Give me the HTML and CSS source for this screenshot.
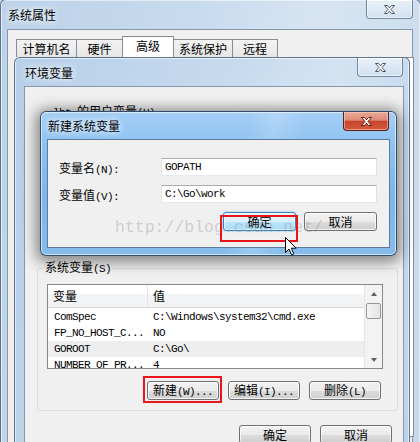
FILE: index.html
```html
<!DOCTYPE html>
<html lang="zh-CN">
<head>
  <meta charset="UTF-8" />
  <title>新建系统变量</title>
  <link rel="stylesheet" href="styles.css">
</head>
<body>
  <div class="desktop">

    <!-- 系统属性 -->
    <div class="win win-sys">
      <div class="titlebar">
        <span class="title">系统属性</span>
        <span class="close">
          <svg width="11" height="9" viewBox="0 0 11 9"><path d="M0.5 0.5h3l2 2.4 2-2.4h3l-3.5 4 3.5 4h-3l-2-2.4-2 2.4h-3l3.5-4z"/></svg>
        </span>
      </div>
      <div class="client sys-client">
        <div class="tabs">
          <div class="tab t1">计算机名</div>
          <div class="tab t2">硬件</div>
          <div class="tab t3 selected">高级</div>
          <div class="tab t4">系统保护</div>
          <div class="tab t5">远程</div>
        </div>
        <div class="tabpage"></div>
      </div>
    </div>

    <!-- 环境变量 -->
    <div class="win win-env">
      <div class="titlebar">
        <span class="title">环境变量</span>
        <span class="close">
          <svg width="11" height="9" viewBox="0 0 11 9"><path d="M0.5 0.5h3l2 2.4 2-2.4h3l-3.5 4 3.5 4h-3l-2-2.4-2 2.4h-3l3.5-4z"/></svg>
        </span>
      </div>
      <div class="client env-client">
        <div class="user-vars">
          <div class="caption"><span class="m">lbt </span>的用户变量<span class="m">(U)</span></div>
        </div>

        <fieldset class="group">
          <legend>系统变量<span class="m">(S)</span></legend>
          <div class="listview">
            <div class="lv-body">
              <div class="lv-header">
                <div class="col-name">变量</div>
                <div class="col-value">值</div>
              </div>
              <div class="lv-rows">
                <div class="lv-row"><div class="col-name m">ComSpec</div><div class="col-value m">C:\Windows\system32\cmd.exe</div></div>
                <div class="lv-row"><div class="col-name m">FP_NO_HOST_C...</div><div class="col-value m">NO</div></div>
                <div class="lv-row hover"><div class="col-name m">GOROOT</div><div class="col-value m">C:\Go\</div></div>
                <div class="lv-row"><div class="col-name m">NUMBER_OF_PR...</div><div class="col-value m">4</div></div>
              </div>
            </div>
            <div class="scrollbar">
              <div class="sb-arrow"><span class="tri up"></span></div>
              <div class="sb-thumb"></div>
              <div class="sb-track"></div>
              <div class="sb-arrow"><span class="tri down"></span></div>
            </div>
          </div>
          <div class="btn-row group-btns">
            <button class="btn">新建<span class="m">(W)...</span></button>
            <button class="btn">编辑<span class="m">(I)...</span></button>
            <button class="btn">删除<span class="m">(L)</span></button>
          </div>
        </fieldset>

        <div class="btn-row env-btns">
          <button class="btn">确定</button>
          <button class="btn">取消</button>
        </div>
      </div>
    </div>

    <!-- 新建系统变量 -->
    <div class="win win-new">
      <div class="titlebar">
        <span class="title">新建系统变量</span>
        <span class="close close-red">
          <svg width="11" height="9" viewBox="0 0 11 9"><path d="M0.5 0.5h3l2 2.4 2-2.4h3l-3.5 4 3.5 4h-3l-2-2.4-2 2.4h-3l3.5-4z"/></svg>
        </span>
      </div>
      <div class="client new-client">
        <div class="field">
          <label class="field-label">变量名<span class="m">(N):</span></label>
          <div class="textbox m">GOPATH</div>
        </div>
        <div class="field">
          <label class="field-label">变量值<span class="m">(V):</span></label>
          <div class="textbox m">C:\Go\work</div>
        </div>
        <div class="btn-row new-btns">
          <button class="btn btn-hot">确定</button>
          <button class="btn">取消</button>
        </div>
      </div>
    </div>

    <!-- 博客水印 / 标注 -->
    <div class="watermark">http://blog.csdn.net/</div>
    <div class="mark mark-ok"></div>
    <div class="mark mark-new"></div>
    <svg class="cursor" width="13" height="19" viewBox="0 0 13 19">
      <path d="M0.5 0.5V15.5L4 12L6.6 17.8L8.8 16.8L6.3 11.2H11.2Z" fill="#fff" stroke="#000" stroke-width="1" stroke-linejoin="miter"/>
    </svg>
  </div>
</body>
</html>
```

FILE: styles.css
```css
body {
  margin: 0;
  font-family: "Noto Sans CJK SC", sans-serif;
  font-size: 12px;
  color: #000;
  background: #c4d8ee;
}

.desktop {
  position: relative;
  width: 420px;
  height: 442px;
  overflow: hidden;
}

.m {
  font-family: "Liberation Mono", monospace;
  font-size: 11px;
  letter-spacing: -0.6px;
}

/* fenetres */
.win {
  position: absolute;
  display: flex;
  flex-direction: column;
  box-sizing: border-box;
  border: 1px solid rgba(60, 80, 105, 0.75);
  border-radius: 6px 6px 0 0;
  background: linear-gradient(100deg, #bcd2e9 0%, #c8dbee 40%, #d7e5f3 65%, #c3d8ed 100%);
  box-shadow: inset 0 0 0 1px rgba(255, 255, 255, 0.55);
}

.titlebar {
  display: flex;
  justify-content: space-between;
  align-items: flex-start;
  flex: none;
}

.title {
  margin-left: 1px;
  text-shadow: 0 0 6px #fff, 0 0 10px rgba(255, 255, 255, 0.8);
}

.close {
  display: flex;
  align-items: center;
  justify-content: center;
  width: 47px;
  height: 19px;
  box-sizing: border-box;
  border: 1px solid rgba(70, 90, 115, 0.7);
  border-top: none;
  border-radius: 0 0 4px 4px;
  background: linear-gradient(rgba(255, 255, 255, 0.55), rgba(215, 228, 242, 0.35));
  box-shadow: inset 0 0 0 1px rgba(255, 255, 255, 0.6);
}

.close svg path {
  fill: #fff;
  stroke: #4a5668;
  stroke-width: 1;
}

.close-red {
  border-color: #5e1e16;
  background: linear-gradient(#e9a895 0%, #dc8c78 45%, #c8432c 52%, #d35a3e 100%);
  box-shadow: inset 0 0 0 1px rgba(255, 220, 210, 0.5);
}

.close-red svg path {
  stroke: #6b1d12;
}

.client {
  flex: 1;
  background: #f0f0f0;
  border: 1px solid #8796a8;
  border-bottom: none;
}

/* 系统属性 */
.win-sys {
  left: 0;
  top: -1px;
  width: 421px;
  height: 470px;
  padding: 0 7px 0 6px;
}

.win-sys .titlebar {
  height: 29px;
  line-height: 29px;
}

.win-sys .title {
  margin-left: 1px;
}

.sys-client {
  padding: 6px 0 0 8px;
}

.tabs {
  display: flex;
  align-items: flex-end;
  height: 21px;
}

.tab {
  box-sizing: border-box;
  height: 18px;
  line-height: 17px;
  text-align: center;
  border: 1px solid #898c95;
  border-bottom: none;
  margin-right: -1px;
  background: linear-gradient(#f3f3f3, #e6e6e6);
}

.t1 { width: 61px; }
.t2 { width: 47px; }
.t3 { width: 52px; }
.t4 { width: 60px; }
.t5 { width: 46px; }

.tab.selected {
  position: relative;
  z-index: 1;
  height: 21px;
  line-height: 18px;
  background: #fff;
}

.tabpage {
  box-sizing: border-box;
  margin-left: 7px;
  width: 391px;
  height: 380px;
  background: #fff;
  border: 1px solid #898c95;
}

/* 环境变量 */
.win-env {
  left: 14px;
  top: 57px;
  width: 396px;
  height: 420px;
  padding: 0 5px 0 9px;
  background: linear-gradient(100deg, #b7cfe8 0%, #c6daee 45%, #d3e3f2 70%, #bdd3ea 100%);
}

.win-env .titlebar {
  height: 28px;
  line-height: 29px;
}

.win-env .close {
  margin-right: 1px;
  width: 46px;
}

.env-client {
  padding: 0 11px 0 12px;
}

.user-vars {
  height: 173px;
  padding-left: 16px;
  box-sizing: border-box;
  padding-top: 17px;
}

.caption {
  line-height: 14px;
}

.group {
  margin: 0;
  width: 361px;
  box-sizing: border-box;
  padding: 0 14px 10px 9px;
  border: 1px solid #d5dfe5;
  border-radius: 3px;
  min-width: 0;
}

.group legend {
  margin-left: -4px;
  padding: 0 2px;
  line-height: 14px;
}

.listview {
  display: flex;
  margin-top: 8px;
  height: 85px;
  box-sizing: border-box;
  border: 1px solid #828790;
  background: #fff;
}

.lv-body {
  flex: 1;
  overflow: hidden;
}

.lv-header {
  display: flex;
  height: 22px;
  line-height: 22px;
  border-bottom: 1px solid #d5d5d5;
  background: linear-gradient(#ffffff 0%, #ffffff 42%, #f3f4f6 42%, #f1f2f4 100%);
}

.lv-header .col-name {
  border-right: 1px solid #e3e4e7;
  padding-left: 5px;
}

.col-name {
  width: 100px;
  flex: none;
  box-sizing: border-box;
  padding-left: 6px;
  white-space: nowrap;
}

.col-value {
  padding-left: 5px;
  white-space: nowrap;
}

.lv-rows {
  padding-top: 1px;
}

.lv-row {
  display: flex;
  height: 16px;
  line-height: 16px;
}

.lv-row.hover {
  background: #eeeeee;
}

.scrollbar {
  width: 17px;
  flex: none;
  display: flex;
  flex-direction: column;
  background: #f3f3f3;
  border-left: 1px solid #e6e6e6;
}

.sb-arrow {
  height: 17px;
  display: flex;
  align-items: center;
  justify-content: center;
}

.tri {
  width: 0;
  height: 0;
  border-left: 3.5px solid transparent;
  border-right: 3.5px solid transparent;
}

.tri.up {
  border-bottom: 4px solid #606060;
}

.tri.down {
  border-top: 4px solid #606060;
}

.sb-thumb {
  height: 16px;
  margin: 1px 1px 0;
  box-sizing: border-box;
  border: 1px solid #979797;
  border-radius: 2px;
  background: linear-gradient(90deg, #f5f5f5, #e4e4e4);
}

.sb-track {
  flex: 1;
}

/* boutons */
.btn-row {
  display: flex;
  justify-content: flex-end;
}

.btn {
  width: 72px;
  height: 19px;
  box-sizing: border-box;
  padding: 0;
  border: 1px solid #707070;
  border-radius: 3px;
  background: linear-gradient(#f2f2f2 0%, #ebebeb 50%, #dddddd 50%, #cfcfcf 100%);
  box-shadow: inset 0 0 0 1px rgba(255, 255, 255, 0.75);
  font-family: "Noto Sans CJK SC", sans-serif;
  font-size: 12px;
  line-height: 16px;
  color: #000;
}

.btn-hot {
  border-color: #3c7fb1;
  background: linear-gradient(#eaf6fd 0%, #d9f0fc 50%, #bee6fd 50%, #a7d9f5 100%);
  box-shadow: inset 0 0 0 1px rgba(255, 255, 255, 0.6), 0 0 2px #5fc6f5;
}

.group-btns {
  margin-top: 12px;
  gap: 9px;
  padding-right: 2px;
}

.env-btns {
  margin-top: 14px;
  gap: 9px;
}

/* 新建系统变量 */
.win-new {
  left: 40px;
  top: 111px;
  width: 357px;
  height: 145px;
  padding: 0 6px 7px 6px;
  border-radius: 6px;
  border-color: rgba(30, 55, 85, 0.85);
  background: linear-gradient(100deg, rgba(255, 255, 255, 0) 55%, rgba(255, 255, 255, 0.18) 62%, rgba(255, 255, 255, 0) 70%),
              linear-gradient(#a4cef5 0%, #8cc1f1 25%, #7cb6ec 60%, #86bdec 100%);
  box-shadow: inset 0 0 0 1px rgba(255, 255, 255, 0.6), 0 2px 14px 4px rgba(0, 0, 0, 0.45);
  z-index: 2;
}

.win-new .titlebar {
  height: 27px;
  line-height: 27px;
}

.win-new .close {
  margin-right: 1px;
  width: 46px;
}

.new-client {
  border: 1px solid #5d7a9a;
  padding: 18px 12px 0 11px;
}

.field {
  display: flex;
  align-items: center;
  height: 18px;
  margin-bottom: 9px;
}

.field-label {
  width: 102px;
  flex: none;
}

.textbox {
  flex: 1;
  height: 18px;
  box-sizing: border-box;
  border: 1px solid;
  border-color: #abadb3 #dbdfe6 #e3e9ef #e2e3ea;
  background: #fff;
  padding-left: 3px;
  line-height: 16px;
}

.new-btns {
  margin-top: 4px;
  gap: 8px;
}

.new-btns .btn {
  width: 73px;
}

/* annotations */
.watermark {
  position: absolute;
  left: 115px;
  top: 218px;
  z-index: 3;
  font-family: "Liberation Mono", monospace;
  font-size: 16.5px;
  color: rgba(150, 150, 150, 0.4);
  white-space: nowrap;
}

.mark {
  position: absolute;
  z-index: 4;
  box-sizing: border-box;
  border: 2px solid #e8161b;
}

.mark-ok {
  left: 220px;
  top: 215px;
  width: 78px;
  height: 27px;
}

.mark-new {
  left: 143px;
  top: 376px;
  width: 79px;
  height: 27px;
}

.cursor {
  position: absolute;
  left: 285px;
  top: 237px;
  z-index: 5;
}
```
